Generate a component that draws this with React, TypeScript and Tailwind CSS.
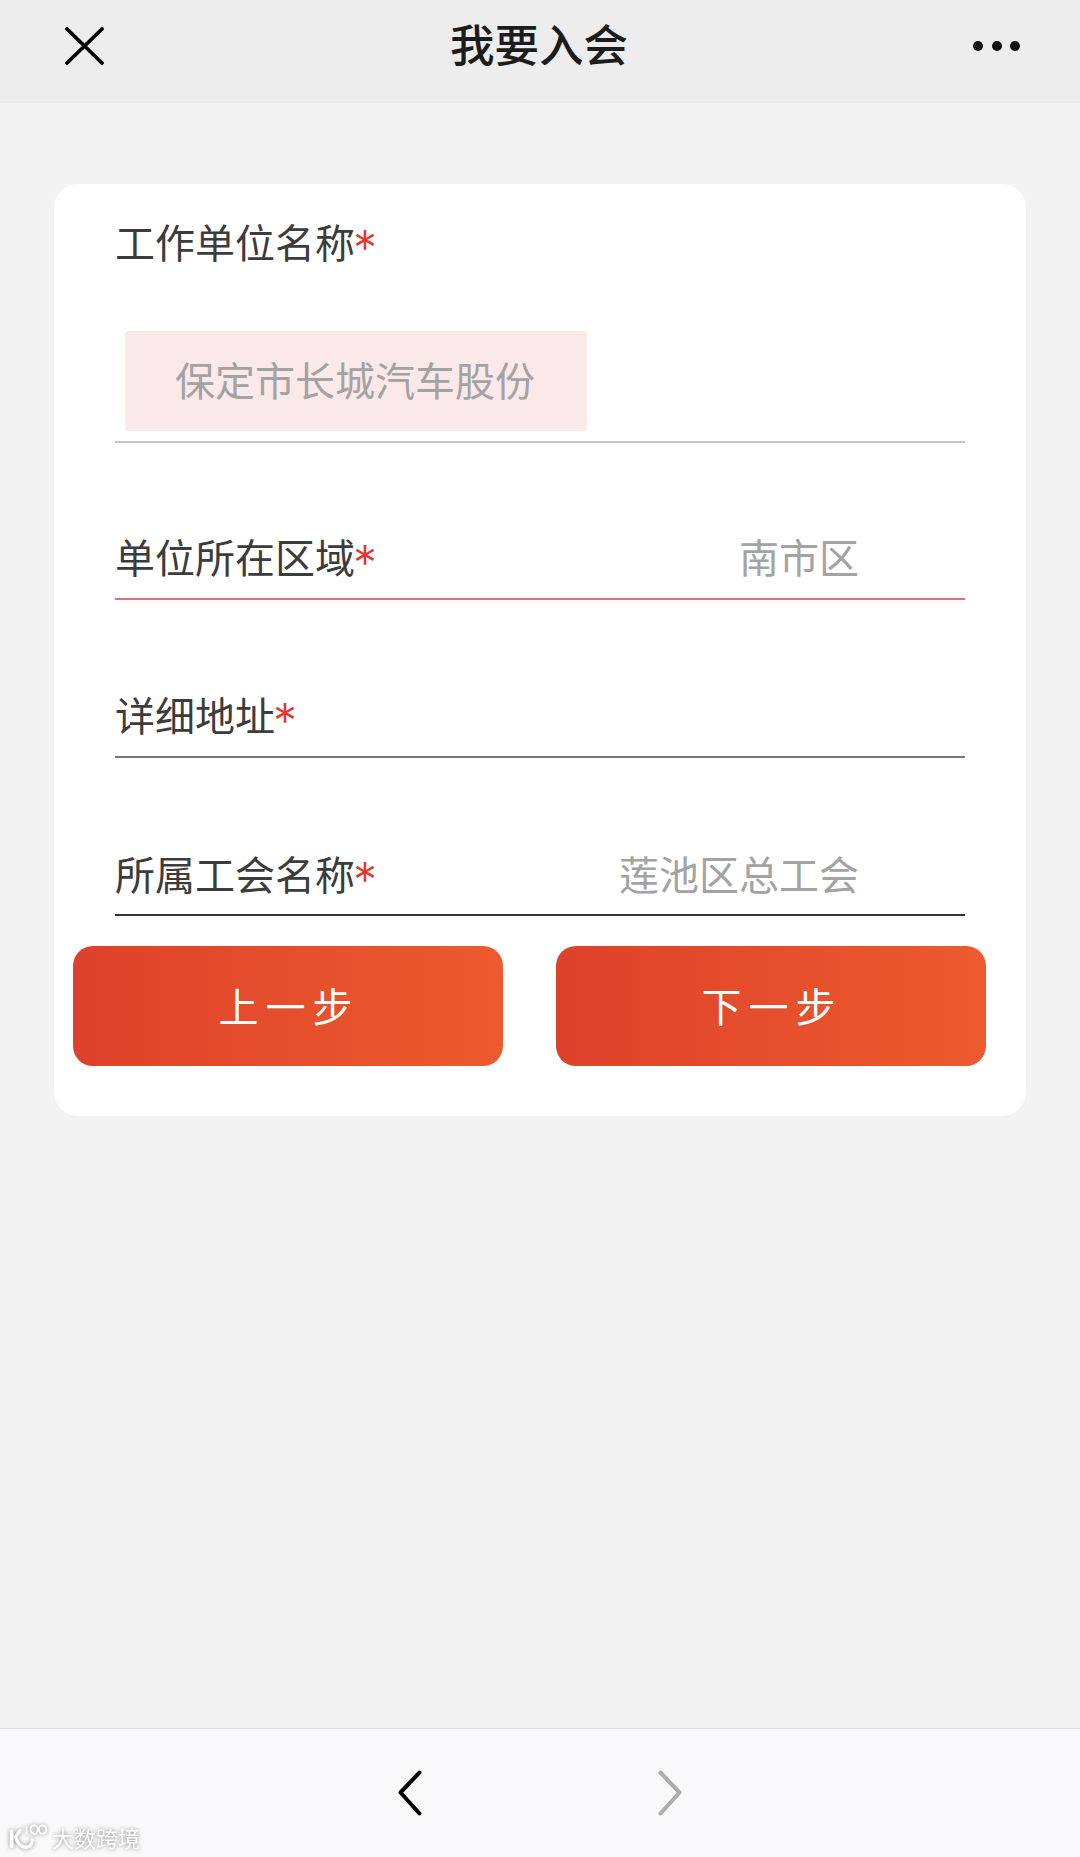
const font = { fontFamily: '"Noto Sans CJK SC", "Noto Sans", sans-serif' };

function Label({ text }: { text: string }) {
  return (
    <span className="text-[40px] leading-[40px] text-[#3c3c3c]">
      {text}
      <span className="-ml-[2px] align-[-7px] font-['Inter'] text-[48px] font-light leading-[0] text-[#e5352b]">*</span>
    </span>
  );
}

function Row({ label, value, line, box }: { label: string; value?: string; line: string; box: string }) {
  return (
    <div className={`flex items-end justify-between border-b-2 pr-[106px] ${box} ${line}`}>
      <Label text={label} />
      {value && <span className="text-[40px] leading-[40px] text-[#a3a3a3]">{value}</span>}
    </div>
  );
}

function StepButton({ text }: { text: string }) {
  return (
    <button
      type="button"
      className="flex h-[120px] w-[430px] items-center justify-center rounded-[20px] bg-gradient-to-r from-[#de412b] to-[#ec5b2e] pb-[3px] pl-[2px] text-[40px] tracking-[7px] text-white"
    >
      {text}
    </button>
  );
}

export default function App() {
  return (
    <div style={font} className="flex h-[1857px] w-[1080px] flex-col overflow-hidden bg-[#f3f3f3]">
      {/* top bar */}
      <header className="grid h-[103px] shrink-0 grid-cols-[1fr_auto_1fr] items-center bg-[#ededed] pb-[12px]">
        <div className="pl-[65px]">
          <svg width="39" height="38" viewBox="0 0 39 38" fill="none" stroke="#000" strokeWidth="3.8" strokeLinecap="round">
            <path d="M2 2l35 34M37 2L2 36" />
          </svg>
        </div>
        <h1 className="mb-[6px] mr-[2px] text-[44.5px] font-medium leading-[50px] text-[#1c1c1c]">我要入会</h1>
        <div className="flex justify-end gap-[8.5px] pr-[60px]">
          <span className="h-[10px] w-[10px] rounded-full bg-[#111]" />
          <span className="h-[10px] w-[10px] rounded-full bg-[#111]" />
          <span className="h-[10px] w-[10px] rounded-full bg-[#111]" />
        </div>
      </header>

      <main className="flex-1 px-[54px] pt-[81px]">
        <section className="h-[932px] rounded-[24px] bg-white pt-[37px]">
          <div className="mx-[61px]">
            <div className="border-b-2 border-[#c4c4c4] pb-[10px]">
              <Label text="工作单位名称" />
              <div className="ml-[10px] mt-[68px] flex h-[100px] w-[462px] items-center rounded-[4px] bg-[#fbe8e8] pb-[5px] pl-[50px] text-[40px] text-[#a3a3a3]">
                保定市长城汽车股份
              </div>
            </div>
            <Row label="单位所在区域" value="南市区" line="border-[#df7277]" box="h-[157px] pb-[22px]" />
            <Row label="详细地址" line="border-[#777777]" box="h-[158px] pb-[22px]" />
            <Row label="所属工会名称" value="莲池区总工会" line="border-[#333333]" box="h-[158px] pb-[21px]" />
          </div>
          <div className="mt-[30px] flex gap-[53px] pl-[19px]">
            <StepButton text="上一步" />
            <StepButton text="下一步" />
          </div>
        </section>
      </main>

      {/* browser nav */}
      <footer className="relative flex h-[129px] shrink-0 items-center justify-center gap-[236px] border-t border-[#dcdcde] bg-[#f9f9fb] pr-[1px]">
        <svg width="24" height="46" viewBox="0 0 24 46" fill="none" stroke="#000" strokeWidth="4" strokeLinecap="round" strokeLinejoin="round">
          <path d="M21.5 2.5L2.5 22.5l19 21" />
        </svg>
        <svg width="24" height="46" viewBox="0 0 24 46" fill="none" stroke="#acacac" strokeWidth="4" strokeLinecap="round" strokeLinejoin="round">
          <path d="M2.5 2.5l19 20-19 21" />
        </svg>

        {/* watermark */}
        <div className="absolute bottom-[6px] left-[8px] flex items-center gap-[3px] [filter:drop-shadow(0_0_2px_#8a8a8a)]">
          <svg width="41" height="28" viewBox="0 0 44 30" fill="none" stroke="#fff" strokeLinecap="round">
            <path d="M4 9v16" strokeWidth="4" />
            <path d="M13 8l-5 7c2 6 6 11 11 11 5 0 7-3 7-8" strokeWidth="3.5" />
            <path d="M20 4v7" strokeWidth="2" />
            <ellipse cx="28" cy="7" rx="4" ry="4.5" strokeWidth="2" />
            <ellipse cx="37" cy="7" rx="4" ry="4.5" strokeWidth="2" />
          </svg>
          <span className="text-[22px] leading-[24px] text-white">大数跨境</span>
        </div>
      </footer>
    </div>
  );
}
